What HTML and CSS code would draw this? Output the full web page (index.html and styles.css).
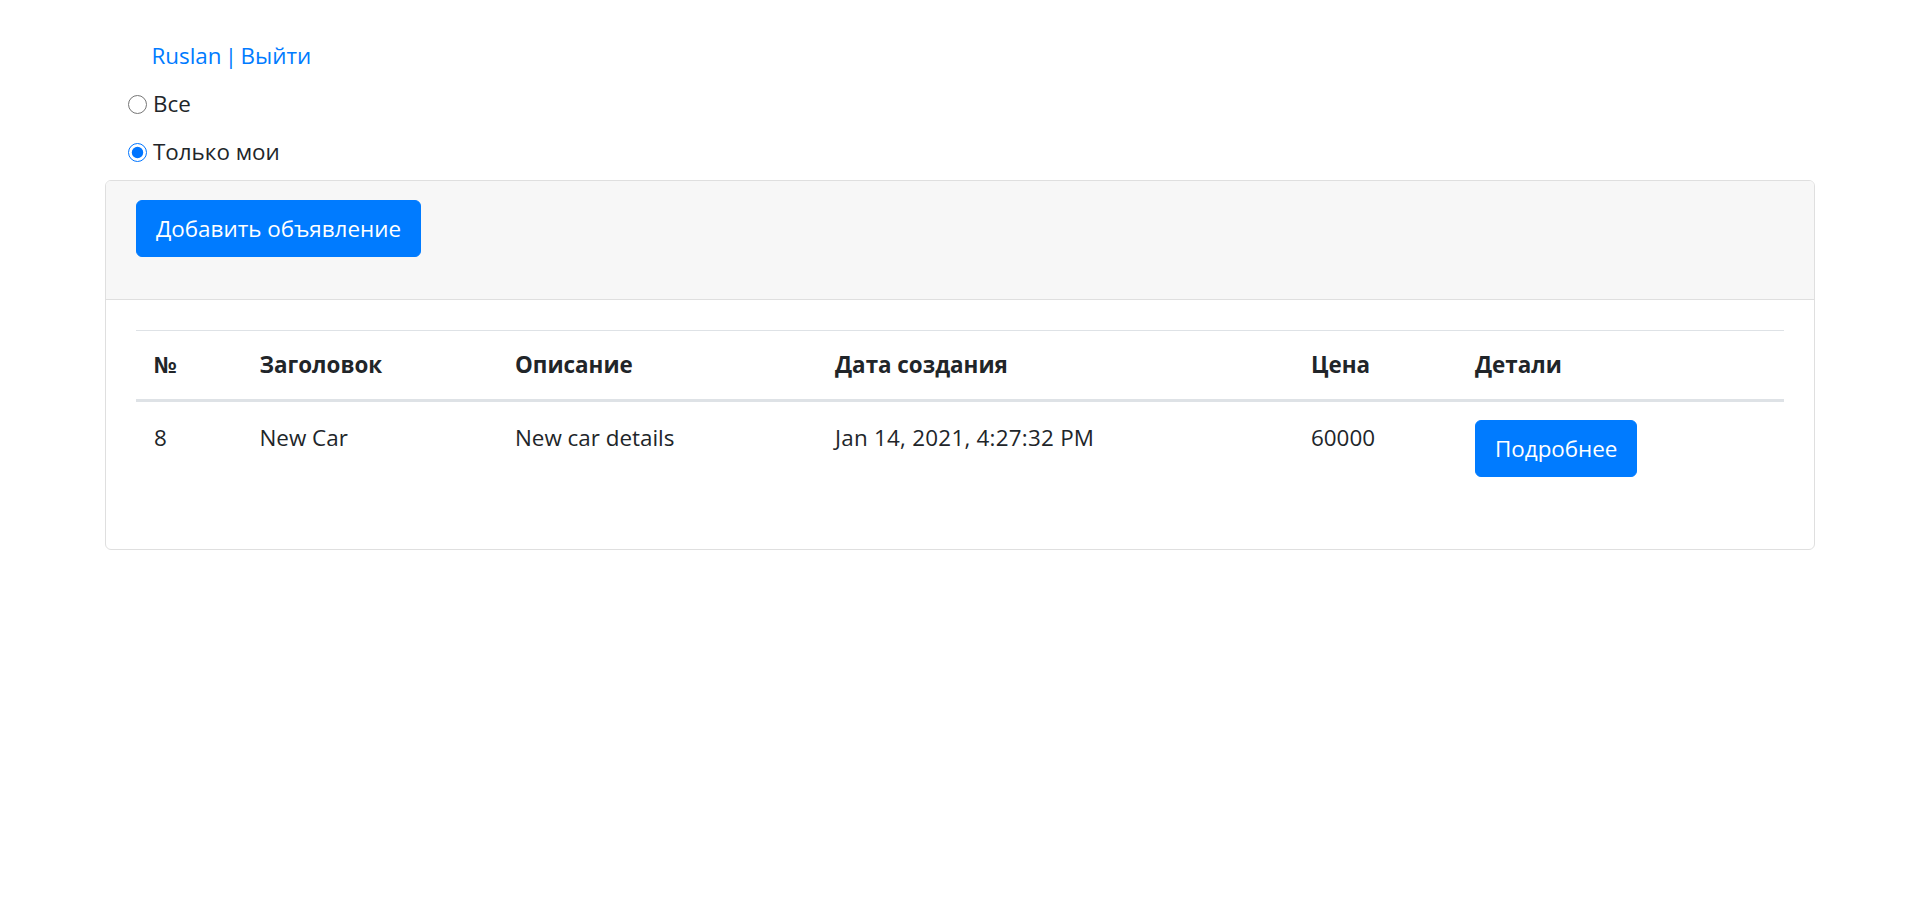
FILE: index.html
```html
<!DOCTYPE html>
<html lang="ru">
<head>
<meta charset="utf-8">
<title>Объявления</title>
<link rel="stylesheet" href="styles.css">
</head>
<body>
<div class="container">
  <div class="userbar"><a class="user-link" href="#">Ruslan | Выйти</a></div>
  <label class="radio-row"><input type="radio" name="filter" class="radio"><span>Все</span></label>
  <label class="radio-row"><input type="radio" name="filter" class="radio" checked><span>Только мои</span></label>
  <div class="card">
    <div class="card-header">
      <button class="btn" type="button">Добавить объявление</button>
    </div>
    <div class="card-body">
      <table class="table">
        <colgroup>
          <col class="c-num"><col class="c-title"><col class="c-desc"><col class="c-date"><col class="c-price"><col class="c-det">
        </colgroup>
        <thead>
          <tr><th>№</th><th>Заголовок</th><th>Описание</th><th>Дата создания</th><th>Цена</th><th>Детали</th></tr>
        </thead>
        <tbody>
          <tr><td>8</td><td>New Car</td><td>New car details</td><td class="date">Jan 14, 2021, 4:27:32 PM</td><td>60000</td><td><button class="btn" type="button">Подробнее</button></td></tr>
        </tbody>
      </table>
    </div>
  </div>
</div>
</body>
</html>
```
FILE: styles.css
```css
html, body {
  margin: 0;
  padding: 0;
  background: #fff;
}
body {
  font-family: "Open Sans", "Noto Sans", "Liberation Sans", sans-serif;
  font-size: 22.4px;
  line-height: 36px;
  color: #212529;
}
.container {
  width: 1710px;
  margin: 0 auto;
  padding-top: 38px;
}
.userbar {
  padding-left: 46.5px;
  height: 36px;
}
.user-link {
  color: #007bff;
  text-decoration: none;
  word-spacing: -2.5px;
}
.radio-row {
  display: flex;
  align-items: center;
  gap: 6px;
  height: 36px;
  padding-left: 23px;
  margin-top: 12px;
}
.radio {
  width: 19px;
  height: 19px;
  margin: 0;
  accent-color: #0075ff;
}
.card {
  margin-top: 10px;
  border: 1px solid #dfdfdf;
  border-radius: 6px;
  overflow: hidden;
}
.card-header {
  background: #f7f7f7;
  padding: 19px 30px 18px;
  border-bottom: 1px solid #dfdfdf;
}
.card-header .btn {
  margin-bottom: 24px;
}
.btn {
  display: inline-block;
  font-family: inherit;
  font-size: 22.4px;
  line-height: 36px;
  color: #fff;
  background: #007bff;
  border: 1px solid #007bff;
  border-radius: 6px;
  padding: 9.5px 19px;
  cursor: pointer;
}
.card-body {
  padding: 30px;
}
.table {
  width: 100%;
  border-collapse: collapse;
  table-layout: fixed;
  margin-bottom: 24px;
}
.c-num { width: 105.5px; }
.c-title { width: 255.5px; }
.c-desc { width: 320px; }
.c-date { width: 476px; }
.c-price { width: 164px; }
.c-det { width: 327px; }
.table th {
  text-align: left;
  font-weight: 700;
  padding: 16px 18px;
  border-top: 1px solid #dee2e6;
  border-bottom: 3px solid #dee2e6;
  vertical-align: bottom;
}
.table td {
  padding: 18px;
  vertical-align: top;
}
.table td.date {
  letter-spacing: 0.25px;
}
```
